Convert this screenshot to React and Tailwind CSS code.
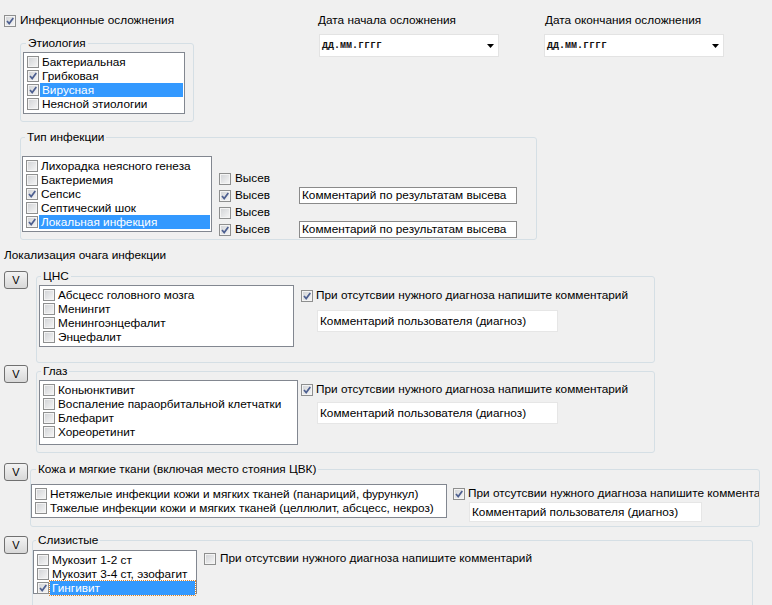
import React from "react";

const CheckBox = ({ checked }) => (
  <span className="w-[12px] h-[12px] shrink-0 flex items-center justify-center border border-[#8e8f8f] bg-linear-to-br from-[#d0d2d5] to-[#f7f7f7] shadow-[inset_0_0_0_1px_#f4f4f4]">
    {checked && (
      <svg width="10" height="10" viewBox="0 0 10 10">
        <path d="M2 5 L4.2 7.6 L8.3 2" fill="none" stroke="#4d5f90" strokeWidth="1.7" />
      </svg>
    )}
  </span>
);

const ListBox = ({ items, className }) => (
  <div className={`bg-white border border-[#828790] pt-[2px] pl-[3px] pr-[1px] shrink-0 ${className}`}>
    {items.map(([label, checked, selected, focused]) => (
      <div key={label} className="flex items-center h-[14px]">
        <CheckBox checked={checked} />
        <span
          className={`flex-1 ml-[1px] pl-[2px] h-[14px] leading-[14px] whitespace-nowrap ${
            selected ? "bg-[#3399ff] text-white" : ""
          } ${focused ? "outline-1 outline-dotted outline-[#d9822b]" : ""}`}
        >
          {label}
        </span>
      </div>
    ))}
  </div>
);

const GroupBox = ({ title, legendClass, className, innerClass, children }) => (
  <fieldset className={`min-w-0 border border-[#d5dfe5] rounded-[3px] shrink-0 ${className}`}>
    <legend className={`px-[2px] leading-[13px] ${legendClass}`}>{title}</legend>
    <div className={`flex items-start ${innerClass}`}>{children}</div>
  </fieldset>
);

const ExpandButton = ({ className }) => (
  <button className={`w-[24px] h-[18px] shrink-0 rounded-[3px] border border-[#707070] bg-linear-to-b from-[#f3f3f3] to-[#d8d8d8] flex items-center justify-center text-[11px] ${className}`}>
    V
  </button>
);

const DateBox = () => (
  <div className="w-[180px] h-[23px] bg-white border border-[#e3e3e3] flex items-center justify-between pl-[2px] pr-[4px]">
    <span className="font-['Liberation_Mono',monospace] font-bold text-[10px] text-[#111]">дд.мм.гггг</span>
    <svg width="7" height="4" viewBox="0 0 7 4">
      <path d="M0 0h7L3.5 4z" fill="#000" />
    </svg>
  </div>
);

const CommentCheck = ({ checked, gap, text = "При отсутсвии нужного диагноза напишите комментарий" }) => (
  <div className="flex items-center h-[13px] whitespace-nowrap">
    <CheckBox checked={checked} />
    <span className={gap}>{text}</span>
  </div>
);

const UserComment = ({ className }) => (
  <div className={`bg-white border border-[#e6e6e6] pl-[2px] flex items-center whitespace-nowrap ${className}`}>
    Комментарий пользователя (диагноз)
  </div>
);

const CultureBox = ({ className }) => (
  <div className={`w-[218px] h-[17px] bg-white border border-[#8a8a8a] pl-[2px] leading-[15px] whitespace-nowrap overflow-hidden ${className}`}>
    Комментарий по результатам высева
  </div>
);

export default function App() {
  return (
    <div className="w-[772px] h-[605px] overflow-hidden bg-[#f0f0f0] text-black text-[11.8px] leading-[13px] font-['Liberation_Sans',Arial,sans-serif]">
      {/* Top: complications + dates */}
      <div className="flex">
        <div className="w-[318px] shrink-0">
          <div className="ml-[4px] mt-[14px] flex items-center h-[13px]">
            <CheckBox checked />
            <span className="ml-[4px]">Инфекционные осложнения</span>
          </div>
          <GroupBox
            title="Этиология"
            legendClass="ml-[5px]"
            className="ml-[20px] mt-[10px] w-[174px]"
            innerClass="h-[71px]"
          >
            <ListBox
              className="ml-[2px] mt-[2px] w-[162px] h-[62px]"
              items={[
                ["Бактериальная", false],
                ["Грибковая", true],
                ["Вирусная", true, true],
                ["Неясной этиологии", false],
              ]}
            />
          </GroupBox>
        </div>
        <div className="w-[226px] shrink-0">
          <div className="mt-[14px] h-[13px]">Дата начала осложнения</div>
          <div className="mt-[7px] ml-[1px]">
            <DateBox />
          </div>
        </div>
        <div className="shrink-0">
          <div className="mt-[14px] h-[13px] ml-[1px]">Дата окончания осложнения</div>
          <div className="mt-[7px]">
            <DateBox />
          </div>
        </div>
      </div>

      {/* Infection type */}
      <GroupBox
        title="Тип инфекции"
        legendClass="ml-[4px]"
        className="ml-[20px] mt-[9px] w-[517px]"
        innerClass="h-[95px]"
      >
        <ListBox
          className="ml-[1px] mt-[12px] w-[190px] h-[76px]"
          items={[
            ["Лихорадка неясного генеза", false],
            ["Бактериемия", false],
            ["Сепсис", true],
            ["Септический шок", false],
            ["Локальная инфекция", true, true],
          ]}
        />
        <div className="ml-[7px] mt-[26px] w-[80px] shrink-0">
          {[false, true, false, true].map((c, i) => (
            <div key={i} className="flex items-center h-[17px]">
              <CheckBox checked={c} />
              <span className="ml-[4px]">Высев</span>
            </div>
          ))}
        </div>
        <div className="mt-[43px]">
          <CultureBox />
          <CultureBox className="mt-[17px]" />
        </div>
      </GroupBox>

      <div className="ml-[4px] mt-[9px] h-[13px]">Локализация очага инфекции</div>

      {/* ЦНС */}
      <div className="flex items-start ml-[4px] mt-[8px]">
        <ExpandButton className="mt-[1px]" />
        <GroupBox title="ЦНС" legendClass="ml-[4px]" className="ml-[8px] w-[619px]" innerClass="h-[79px]">
          <ListBox
            className="ml-[2px] mt-[2px] w-[255px] h-[62px]"
            items={[
              ["Абсцесс головного мозга", false],
              ["Менингит", false],
              ["Менингоэнцефалит", false],
              ["Энцефалит", false],
            ]}
          />
          <div className="ml-[7px] mt-[6px]">
            <CommentCheck checked gap="ml-[3px]" />
            <UserComment className="mt-[8px] ml-[16px] w-[241px] h-[22px]" />
          </div>
        </GroupBox>
      </div>

      {/* Глаз */}
      <div className="flex items-start ml-[4px] mt-[2px]">
        <ExpandButton />
        <GroupBox title="Глаз" legendClass="ml-[4px]" className="ml-[8px] w-[619px]" innerClass="h-[74px]">
          <ListBox
            className="ml-[2px] mt-[2px] w-[259px] h-[65px]"
            items={[
              ["Коньюнктивит", false],
              ["Воспаление параорбитальной клетчатки", false],
              ["Блефарит", false],
              ["Хореоретинит", false],
            ]}
          />
          <div className="ml-[3px] mt-[5px]">
            <CommentCheck checked gap="ml-[3px]" />
            <UserComment className="mt-[6px] ml-[16px] w-[241px] h-[22px]" />
          </div>
        </GroupBox>
      </div>

      {/* Кожа */}
      <div className="flex items-start ml-[4px] mt-[10px]">
        <ExpandButton />
        <GroupBox
          title="Кожа и мягкие ткани (включая место стояния ЦВК)"
          legendClass="ml-[5px]"
          className="ml-[2px] w-[730px]"
          innerClass="h-[50px] overflow-hidden"
        >
          <ListBox
            className="mt-[8px] w-[416px] h-[34px]"
            items={[
              ["Нетяжелые инфекции кожи и мягких тканей (панариций, фурункул)", false],
              ["Тяжелые инфекции кожи и мягких тканей (целлюлит, абсцесс, некроз)", false],
            ]}
          />
          <div className="ml-[6px] mt-[11px]">
            <CommentCheck checked gap="ml-[3px]" />
            <UserComment className="mt-[2px] ml-[16px] w-[233px] h-[20px]" />
          </div>
        </GroupBox>
      </div>

      {/* Слизистые */}
      <div className="flex items-start ml-[4px] mt-[7px]">
        <ExpandButton className="mt-[2px]" />
        <GroupBox title="Слизистые" legendClass="ml-[3px]" className="ml-[4px] w-[721px]" innerClass="h-[80px]">
          <ListBox
            className="mt-[3px] w-[164px] h-[44px]"
            items={[
              ["Мукозит 1-2 ст", false],
              ["Мукозит 3-4 ст, эзофагит", false],
              ["Гингивит", true, true, true],
            ]}
          />
          <div className="ml-[7px] mt-[5px]">
            <CommentCheck gap="ml-[4px]" />
          </div>
        </GroupBox>
      </div>
    </div>
  );
}
